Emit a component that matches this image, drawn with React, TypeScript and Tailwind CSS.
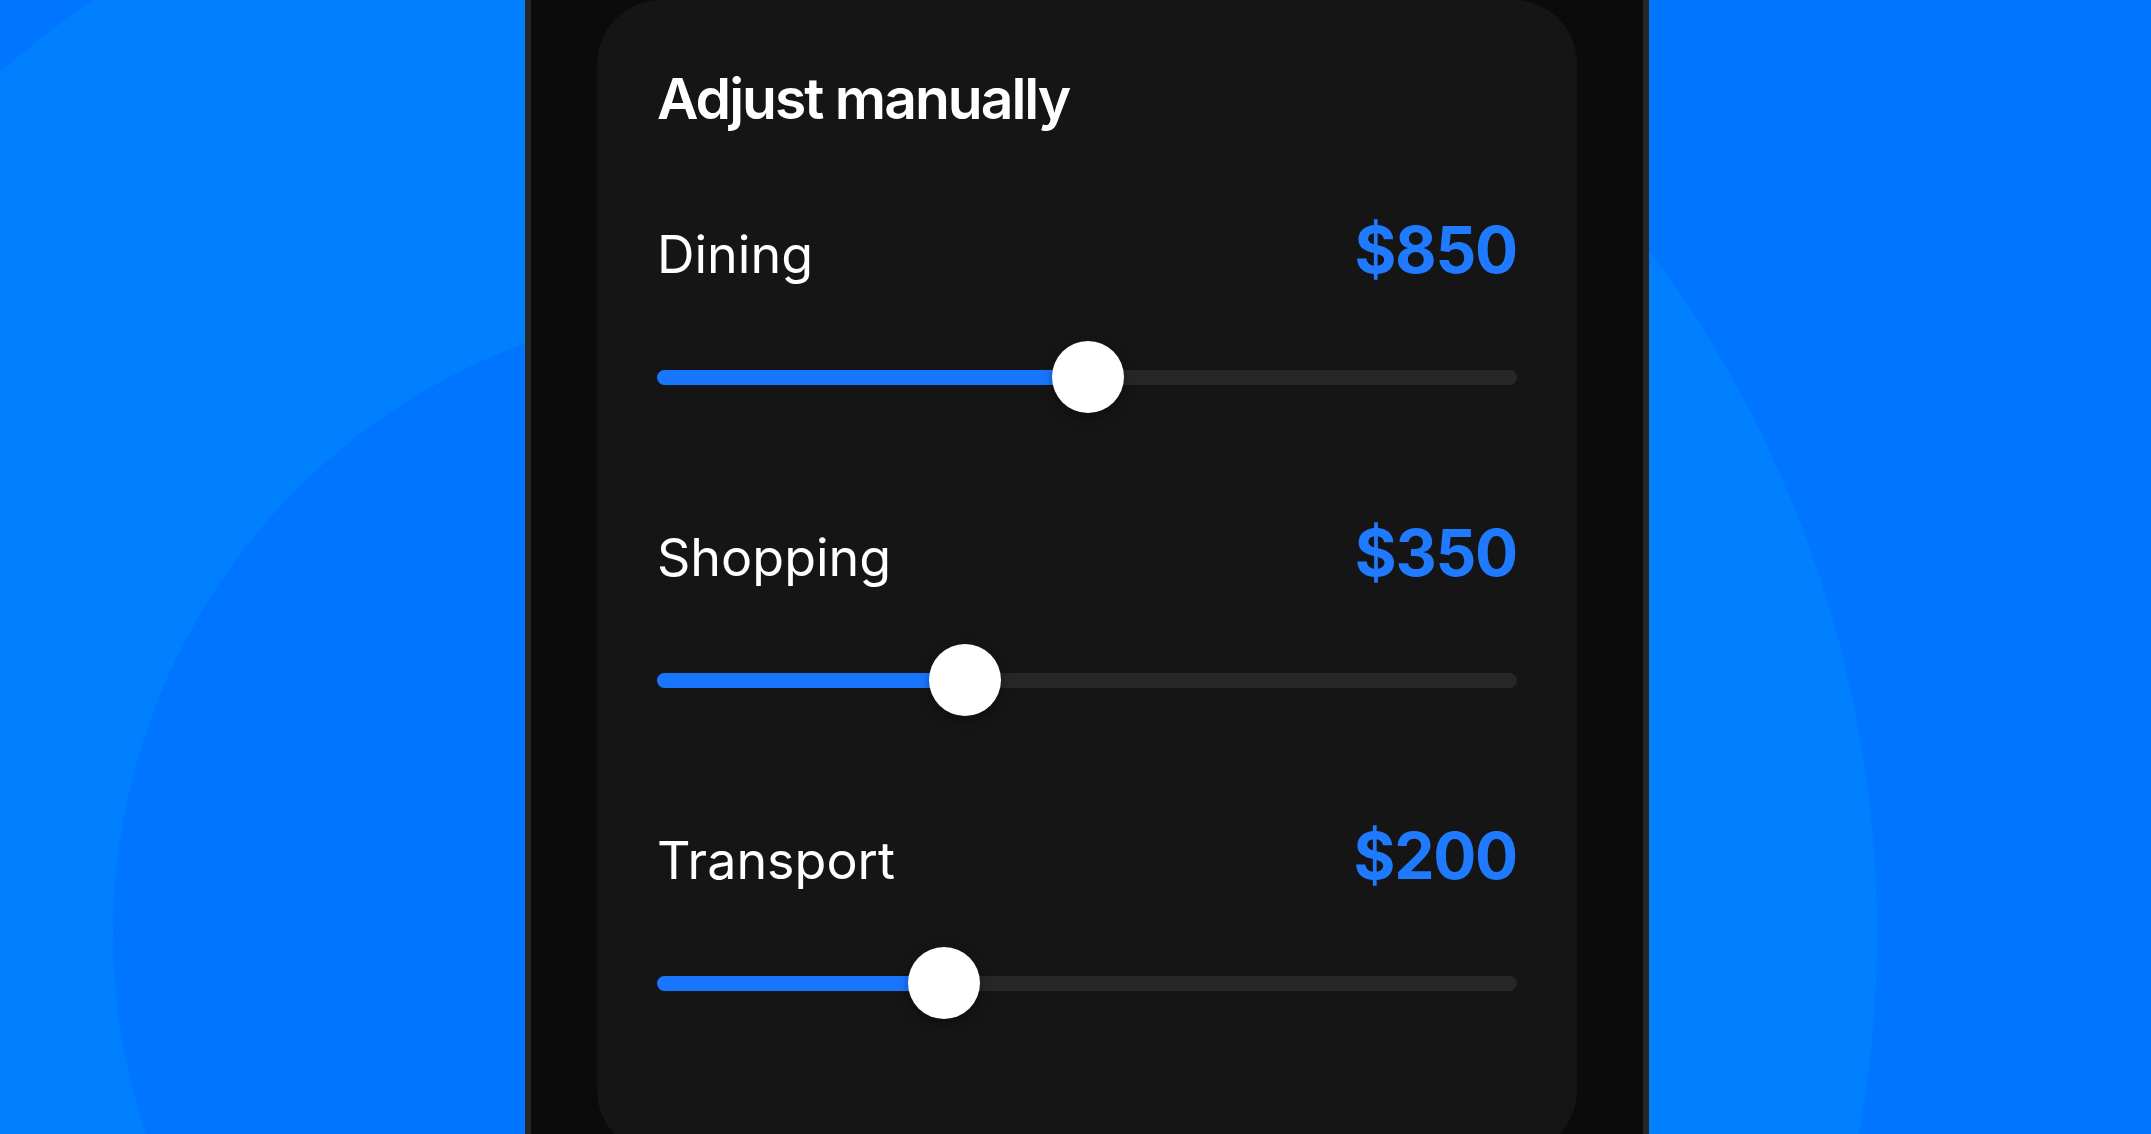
const rows = [
  { label: "Dining", value: "$850", pct: 50.1 },
  { label: "Shopping", value: "$350", pct: 35.8 },
  { label: "Transport", value: "$200", pct: 33.4 },
];

const Slider = ({ pct }: { pct: number }) => {
  return (
    <div className="mt-[59px] flex h-[72px] items-center">
      <div className="relative h-[15px] w-full rounded-full bg-[#272727]">
        <div
          className="absolute left-0 top-0 h-full rounded-full bg-[#1a76ff]"
          style={{ width: `${pct}%` }}
        />
        <div
          className="absolute top-1/2 h-[72px] w-[72px] -translate-x-1/2 -translate-y-1/2 rounded-full bg-white shadow-[0_4px_12px_rgba(0,0,0,0.35)]"
          style={{ left: `${pct}%` }}
        />
      </div>
    </div>
  );
};

const Row = ({ label, value, pct, first }: { label: string; value: string; pct: number; first: boolean }) => {
  return (
    <div className={first ? "mt-[91px]" : "mt-[108px]"}>
      <div className="flex items-baseline justify-between">
        <span className="text-[52px] leading-[52px] font-normal text-white">{label}</span>
        <span className="text-[64px] leading-[64px] font-bold tracking-[-0.02em] text-[#1f7aff]">{value}</span>
      </div>
      <Slider pct={pct} />
    </div>
  );
};

export default function App() {
  return (
    <div className="relative h-[1134px] w-full overflow-hidden bg-[#0075ff] font-['Inter','Liberation_Sans',sans-serif]">
      {/* background rings */}
      <svg className="absolute inset-0 h-full w-full" viewBox="0 0 2151 1134" preserveAspectRatio="none">
        <rect x="0" y="0" width="2151" height="1134" fill="#0075ff" />
        <circle cx="741" cy="933" r="1136" fill="#0080ff" />
        <circle cx="741" cy="933" r="628" fill="#0075ff" />
      </svg>

      <div className="relative ml-[525px] h-full w-[1124px] border-x-[6px] border-[#262626] bg-[#0b0b0b] px-[66px]">
        <div className="h-[1154px] rounded-[64px] bg-[#151515] px-[60px] pt-[70px]">
          <h1 className="text-[57px] leading-[57px] font-semibold tracking-[-0.035em] text-white">Adjust manually</h1>
          {rows.map((r, i) => (
            <Row key={r.label} label={r.label} value={r.value} pct={r.pct} first={i === 0} />
          ))}
        </div>
      </div>
    </div>
  );
}
